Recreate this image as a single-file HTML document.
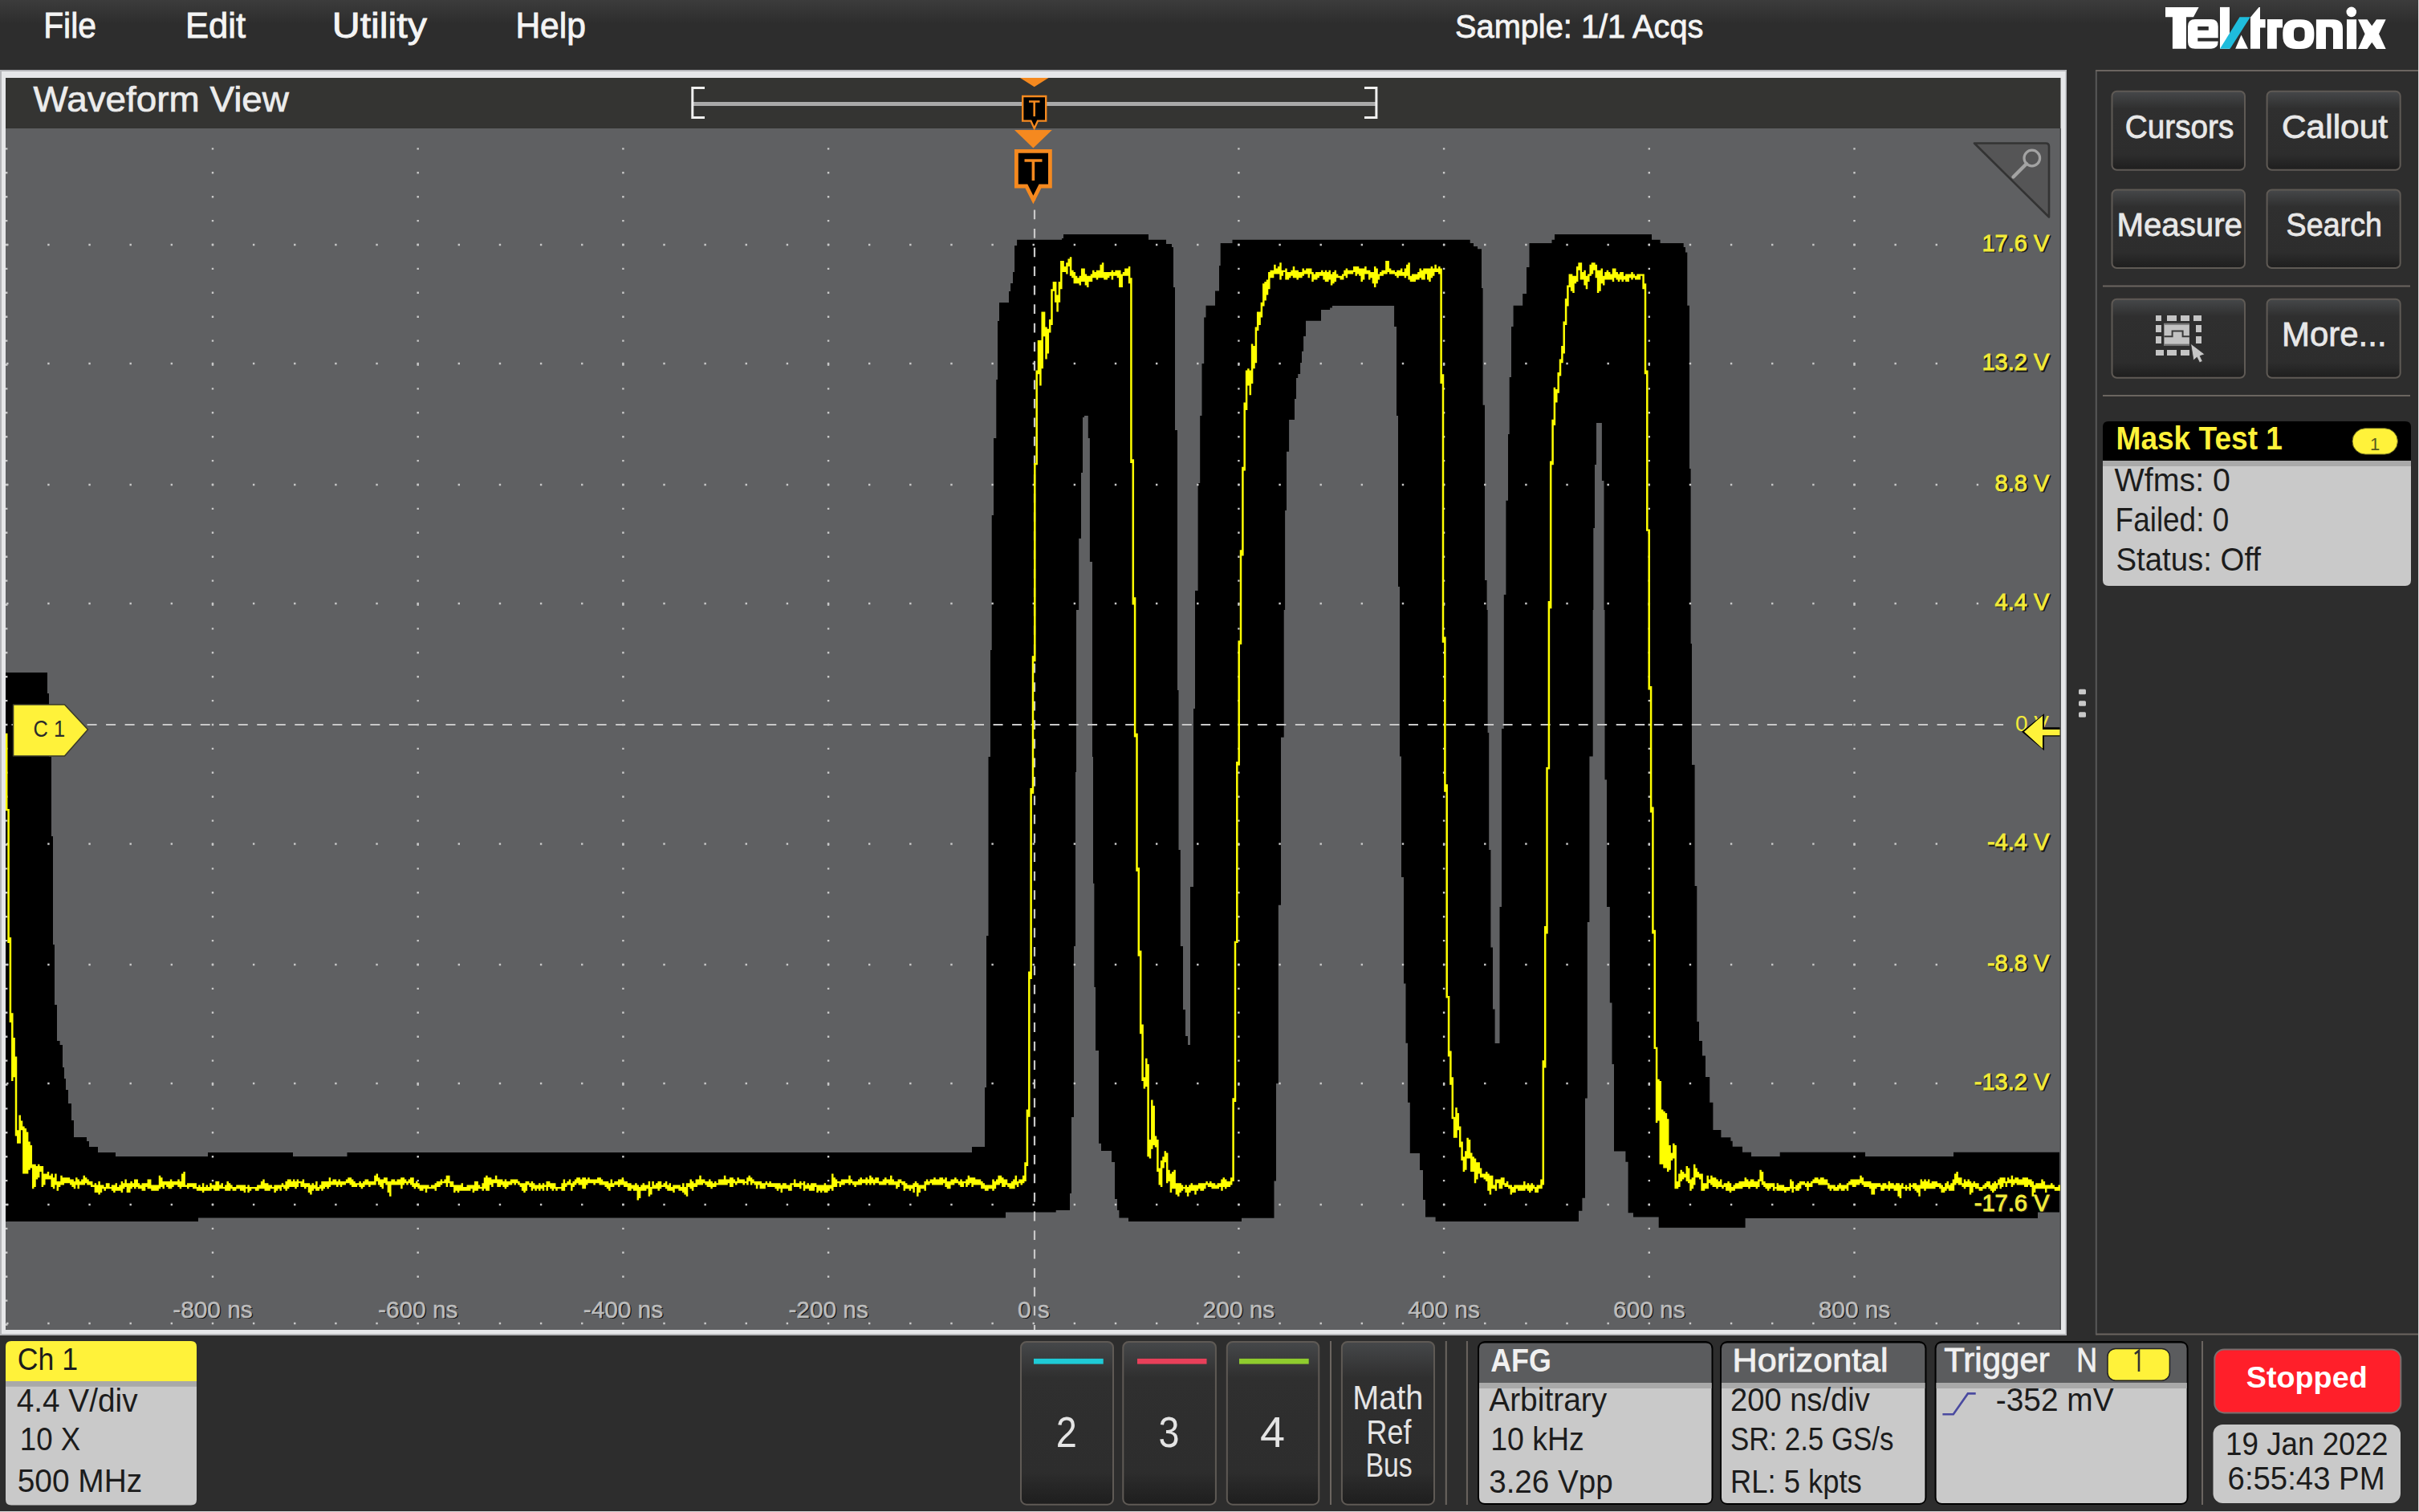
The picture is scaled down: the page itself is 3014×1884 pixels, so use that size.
<!DOCTYPE html><html><head><meta charset="utf-8"><style>
html,body{margin:0;padding:0;background:#2d2d2d;width:3014px;height:1884px;overflow:hidden}
svg{display:block;font-family:"Liberation Sans",sans-serif}
</style></head><body>
<svg width="3014" height="1884" viewBox="0 0 3014 1884">
<defs>
<linearGradient id="gTop" x1="0" y1="0" x2="0" y2="1"><stop offset="0" stop-color="#3c3c3c"/><stop offset="1" stop-color="#2d2d2d"/></linearGradient>
<linearGradient id="gBtn" x1="0" y1="0" x2="0" y2="1"><stop offset="0" stop-color="#46484a"/><stop offset="0.22" stop-color="#2f2f2f"/><stop offset="0.8" stop-color="#2d2d2d"/><stop offset="1" stop-color="#1e1e1e"/></linearGradient>
</defs>
<rect x="0" y="0" width="3014" height="1884" fill="#2d2d2d"/>
<rect x="0" y="0" width="3014" height="30" fill="url(#gTop)"/>

<rect x="0" y="87" width="2575" height="1577" fill="#b5b6b9"/>
<rect x="2" y="89" width="2571.5" height="1573" fill="#e6e7e9"/>
<rect x="7" y="97" width="2560.5" height="63" fill="#343432"/>
<rect x="7" y="160" width="2560.5" height="1497" fill="#5f6062"/><rect x="2566" y="160" width="2" height="1497" fill="#545557"/>
<path d="M7,838 L59,838 L59,864 L61,864 L61,943 L64,943 L64,1042 L66,1042 L66,1177 L68,1177 L68,1252 L71,1252 L71,1297 L74.6,1297 L74.6,1302 L78,1302 L78,1330 L80,1330 L80,1344 L82,1344 L82,1358 L85,1358 L85,1375 L89,1375 L89,1396 L92,1396 L92,1417 L108,1417 L108,1422 L111,1422 L111,1429 L122,1429 L122,1436 L144,1436 L144,1441 L259,1441 L259,1436 L365,1436 L365,1441 L432.5,1441 L432.5,1436 L1211,1436 L1211,1429 L1227,1429 L1227,1355 L1229,1355 L1229,1166 L1231.5,1166 L1231.5,943 L1234,943 L1234,810 L1235.7,810 L1235.7,642 L1238,642 L1238,546 L1241.3,546 L1241.3,473 L1243,473 L1243,400 L1245,400 L1245,377 L1257,377 L1257,363 L1259.1,363 L1259.1,353 L1262,353 L1262,339 L1264.1,339 L1264.1,306 L1267.1,306 L1267.1,298.8 L1323,298.8 L1323,297 L1325,297 L1325,292.1 L1431,292.1 L1431,298.8 L1453,298.8 L1453,304 L1460,304 L1460,308 L1462,308 L1462,358 L1464,358 L1464,536 L1467,536 L1467,860 L1468.5,860 L1468.5,1059 L1470.8,1059 L1470.8,1179 L1474,1179 L1474,1258 L1477,1258 L1477,1291 L1480,1291 L1480,1302 L1483,1302 L1483,1105 L1487,1105 L1487,883 L1489,883 L1489,736 L1492.6,736 L1492.6,602 L1495.2,602 L1495.2,518 L1497.5,518 L1497.5,453 L1500.2,453 L1500.2,395.5 L1502.5,395.5 L1502.5,380.7 L1514,380.7 L1514,362.5 L1519,362.5 L1519,331 L1520.7,331 L1520.7,303 L1535.5,303 L1535.5,298.8 L1831.7,298.8 L1831.7,303 L1836,303 L1836,307 L1841,307 L1841,310.3 L1846,310.3 L1846,359 L1847.6,359 L1847.6,504.7 L1850,504.7 L1850,723 L1852.6,723 L1852.6,760 L1853.6,760 L1853.6,913 L1855.2,913 L1855.2,1059 L1857.4,1059 L1857.4,1180.6 L1860,1180.6 L1860,1257.4 L1862.6,1257.4 L1862.6,1300 L1868.5,1300 L1868.5,1130 L1871,1130 L1871,908 L1873.8,908 L1873.8,741 L1876.4,741 L1876.4,623.7 L1879,623.7 L1879,541 L1880.7,541 L1880.7,470 L1883,470 L1883,407 L1885.6,407 L1885.6,380.7 L1897.2,380.7 L1897.2,366 L1902,366 L1902,333 L1905.5,333 L1905.5,303 L1933.5,303 L1933.5,298.8 L1937,298.8 L1937,292.1 L2058,292.1 L2058,298.8 L2068.6,298.8 L2068.6,303 L2097.7,303 L2097.7,308 L2100,308 L2100,314.6 L2102.3,314.6 L2102.3,380.7 L2105,380.7 L2105,584 L2106.6,584 L2106.6,802 L2108,802 L2108,953 L2111.6,953 L2111.6,1104 L2114.3,1104 L2114.3,1273 L2117,1273 L2117,1297 L2121,1297 L2121,1315.6 L2125,1315.6 L2125,1342 L2130.2,1342 L2130.2,1373.8 L2134.4,1373.8 L2134.4,1408 L2144.4,1408 L2144.4,1417.3 L2156.4,1417.3 L2156.4,1421.8 L2158.7,1421.8 L2158.7,1428.7 L2171,1428.7 L2171,1435.8 L2182,1435.8 L2182,1441 L2217.7,1441 L2217.7,1435.8 L2324,1435.8 L2324,1441 L2434,1441 L2434,1435.8 L2566,1435.8 L2566,1510.6 L2539,1510.6 L2539,1518 L2174.6,1518 L2174.6,1529.7 L2066.7,1529.7 L2066.7,1516.6 L2035,1516.6 L2035,1511.3 L2028.6,1511.3 L2028.6,1447.8 L2025.4,1447.8 L2025.4,1434.6 L2011,1434.6 L2011,1326 L2008.5,1326 L2008.5,1249.4 L2005.8,1249.4 L2005.8,1130 L2002,1130 L2002,971.6 L1999.5,971.6 L1999.5,760 L1998.5,760 L1998.5,599 L1995.9,599 L1995.9,527 L1989,527 L1989,579 L1987,579 L1987,658 L1985.3,658 L1985.3,760 L1984.7,760 L1984.7,942.5 L1980.4,942.5 L1980.4,1149 L1977.8,1149 L1977.8,1368.5 L1975,1368.5 L1975,1492.8 L1971.4,1492.8 L1971.4,1508.7 L1967,1508.7 L1967,1522 L1788.6,1522 L1788.6,1516.6 L1776,1516.6 L1776,1495 L1773,1495 L1773,1458 L1769,1458 L1769,1437 L1756.8,1437 L1756.8,1373.8 L1754,1373.8 L1754,1299.7 L1751.5,1299.7 L1751.5,1225.6 L1749,1225.6 L1749,1093 L1746,1093 L1746,942.5 L1744,942.5 L1744,731 L1742,731 L1742,518 L1740,518 L1740,407 L1737.1,407 L1737.1,380.9 L1660,380.9 L1660,383.4 L1657.1,383.4 L1657.1,386 L1646,386 L1646,399.7 L1627,399.7 L1627,419 L1624.1,419 L1624.1,437.7 L1622,437.7 L1622,452 L1620.1,452 L1620.1,466 L1617.2,466 L1617.2,471 L1615,471 L1615,497 L1613,497 L1613,523 L1606.1,523 L1606.1,562.8 L1603,562.8 L1603,636 L1601.1,636 L1601.1,760 L1599.7,760 L1599.7,918.7 L1596,918.7 L1596,1127.7 L1592.8,1127.7 L1592.8,1350 L1590,1350 L1590,1471.6 L1587.5,1471.6 L1587.5,1517.7 L1547,1517.7 L1547,1522 L1406,1522 L1406,1517.4 L1394.4,1517.4 L1394.4,1508 L1392,1508 L1392,1494 L1389,1494 L1389,1448 L1385,1448 L1385,1434 L1372,1434 L1372,1424.8 L1369,1424.8 L1369,1309 L1365,1309 L1365,1230 L1363.4,1230 L1363.4,1100.7 L1362,1100.7 L1362,943 L1361,943 L1361,700 L1357.9,700 L1357.9,546 L1355.8,546 L1355.8,518 L1351,518 L1351,520 L1349,520 L1349,589 L1347,589 L1347,671 L1344.2,671 L1344.2,760 L1341,760 L1341,962 L1340,962 L1340,1179 L1338,1179 L1338,1392 L1335,1392 L1335,1487 L1333,1487 L1333,1508 L1315.7,1508 L1315.7,1510.5 L1253,1510.5 L1253,1517.5 L247,1517.5 L247,1522 L7,1522 Z" fill="#000"/>
<clipPath id="cg"><rect x="7" y="160" width="2560.5" height="1497"/></clipPath><g clip-path="url(#cg)"><line x1="8.10" y1="305.0" x2="2440" y2="305.0" stroke="#c8c8c8" stroke-width="2.4" stroke-dasharray="2.4 48.738"/><line x1="8.10" y1="453.0" x2="2440" y2="453.0" stroke="#c8c8c8" stroke-width="2.4" stroke-dasharray="2.4 48.738"/><line x1="8.10" y1="604.0" x2="2480" y2="604.0" stroke="#c8c8c8" stroke-width="2.4" stroke-dasharray="2.4 48.738"/><line x1="8.10" y1="752.0" x2="2480" y2="752.0" stroke="#c8c8c8" stroke-width="2.4" stroke-dasharray="2.4 48.738"/><line x1="8.10" y1="1051.5" x2="2440" y2="1051.5" stroke="#c8c8c8" stroke-width="2.4" stroke-dasharray="2.4 48.738"/><line x1="8.10" y1="1202.0" x2="2440" y2="1202.0" stroke="#c8c8c8" stroke-width="2.4" stroke-dasharray="2.4 48.738"/><line x1="8.10" y1="1350.0" x2="2440" y2="1350.0" stroke="#c8c8c8" stroke-width="2.4" stroke-dasharray="2.4 48.738"/><line x1="8.10" y1="1501.0" x2="2440" y2="1501.0" stroke="#c8c8c8" stroke-width="2.4" stroke-dasharray="2.4 48.738"/><line x1="8.10" y1="1649.0" x2="2560" y2="1649.0" stroke="#c8c8c8" stroke-width="2.4" stroke-dasharray="2.4 48.738"/><line x1="265.0" y1="154.30" x2="265.0" y2="1605" stroke="#c8c8c8" stroke-width="2.4" stroke-dasharray="2.4 27.500"/><line x1="520.7" y1="154.30" x2="520.7" y2="1605" stroke="#c8c8c8" stroke-width="2.4" stroke-dasharray="2.4 27.500"/><line x1="776.4" y1="154.30" x2="776.4" y2="1605" stroke="#c8c8c8" stroke-width="2.4" stroke-dasharray="2.4 27.500"/><line x1="1032.1" y1="154.30" x2="1032.1" y2="1605" stroke="#c8c8c8" stroke-width="2.4" stroke-dasharray="2.4 27.500"/><line x1="1543.4" y1="154.30" x2="1543.4" y2="1605" stroke="#c8c8c8" stroke-width="2.4" stroke-dasharray="2.4 27.500"/><line x1="1799.1" y1="154.30" x2="1799.1" y2="1605" stroke="#c8c8c8" stroke-width="2.4" stroke-dasharray="2.4 27.500"/><line x1="2054.8" y1="154.30" x2="2054.8" y2="1605" stroke="#c8c8c8" stroke-width="2.4" stroke-dasharray="2.4 27.500"/><line x1="2310.5" y1="154.30" x2="2310.5" y2="1605" stroke="#c8c8c8" stroke-width="2.4" stroke-dasharray="2.4 27.500"/><line x1="8.2" y1="154.30" x2="8.2" y2="1652" stroke="#c8c8c8" stroke-width="2.4" stroke-dasharray="2.4 27.500"/><line x1="14.5" y1="903" x2="2497" y2="903" stroke="#c8c8c8" stroke-width="2.2" stroke-dasharray="12 11.52"/><line x1="1289" y1="167.25" x2="1289" y2="1657" stroke="#c8c8c8" stroke-width="2.2" stroke-dasharray="11.8 11.75"/></g>
<path d="M8.2,913.7V1010.3M10.6,1007.9V1175.1M12.9,1168.1V1274.1M15.3,1262.3V1347.1M17.6,1292.9V1342.3M20.0,1316.4V1415.4M22.3,1408.3V1424.8M24.7,1389.5V1424.8M27.0,1396.5V1408.3M29.4,1403.6V1462.5M31.8,1405.9V1462.5M34.1,1410.6V1462.5M36.5,1422.4V1457.7M38.8,1427.1V1455.4M41.2,1450.7V1481.3M43.5,1450.7V1478.9M45.9,1453.0V1469.5M48.2,1450.7V1467.2M50.6,1453.0V1460.1M52.9,1453.0V1478.9M55.3,1462.5V1476.6M57.7,1462.5V1469.5M60.0,1460.1V1469.5M62.4,1464.8V1469.5M64.7,1462.5V1478.9M67.1,1467.2V1481.3M69.4,1462.5V1476.6M71.8,1471.9V1483.7M74.1,1471.9V1478.9M76.5,1464.8V1476.6M78.8,1467.2V1476.6M81.2,1467.2V1474.2M83.6,1467.2V1474.2M85.9,1467.2V1474.2M88.3,1469.5V1476.6M90.6,1469.5V1478.9M93.0,1471.9V1481.3M95.3,1467.2V1476.6M97.7,1469.5V1481.3M100.0,1471.9V1476.6M102.4,1469.5V1476.6M104.8,1464.8V1476.6M107.1,1467.2V1474.2M109.5,1469.5V1476.6M111.8,1471.9V1476.6M114.2,1471.9V1478.9M116.5,1476.6V1478.9M118.9,1474.2V1486.0M121.2,1476.6V1486.0M123.6,1471.9V1488.4M126.0,1476.6V1486.0M128.3,1476.6V1481.3M130.7,1478.9V1483.7M133.0,1474.2V1481.3M135.4,1474.2V1481.3M137.7,1478.9V1481.3M140.1,1476.6V1483.7M142.4,1476.6V1486.0M144.8,1474.2V1483.7M147.1,1478.9V1483.7M149.5,1476.6V1483.7M151.9,1471.9V1486.0M154.2,1474.2V1481.3M156.6,1469.5V1478.9M158.9,1474.2V1486.0M161.3,1474.2V1486.0M163.6,1471.9V1481.3M166.0,1474.2V1478.9M168.3,1469.5V1481.3M170.7,1469.5V1478.9M173.0,1474.2V1481.3M175.4,1476.6V1481.3M177.8,1474.2V1483.7M180.1,1474.2V1483.7M182.5,1474.2V1478.9M184.8,1469.5V1481.3M187.2,1469.5V1481.3M189.5,1476.6V1483.7M191.9,1476.6V1483.7M194.2,1476.6V1483.7M196.6,1476.6V1483.7M199.0,1464.8V1481.3M201.3,1467.2V1478.9M203.7,1471.9V1481.3M206.0,1471.9V1476.6M208.4,1471.9V1478.9M210.7,1471.9V1481.3M213.1,1469.5V1481.3M215.4,1471.9V1478.9M217.8,1471.9V1476.6M220.1,1471.9V1476.6M222.5,1469.5V1478.9M224.9,1471.9V1481.3M227.2,1462.5V1478.9M229.6,1460.1V1478.9M231.9,1476.6V1478.9M234.3,1474.2V1481.3M236.6,1474.2V1478.9M239.0,1474.2V1478.9M241.3,1474.2V1481.3M243.7,1474.2V1481.3M246.1,1478.9V1483.7M248.4,1476.6V1483.7M250.8,1478.9V1483.7M253.1,1474.2V1486.0M255.5,1478.9V1483.7M257.8,1476.6V1483.7M260.2,1478.9V1483.7M262.5,1474.2V1483.7M264.9,1476.6V1481.3M267.2,1476.6V1483.7M269.6,1471.9V1483.7M272.0,1471.9V1483.7M274.3,1476.6V1481.3M276.7,1474.2V1481.3M279.0,1478.9V1481.3M281.4,1476.6V1483.7M283.7,1471.9V1483.7M286.1,1474.2V1483.7M288.4,1476.6V1481.3M290.8,1478.9V1483.7M293.2,1478.9V1483.7M295.5,1476.6V1481.3M297.9,1476.6V1481.3M300.2,1476.6V1483.7M302.6,1476.6V1483.7M304.9,1476.6V1486.0M307.3,1478.9V1481.3M309.6,1476.6V1486.0M312.0,1478.9V1483.7M314.3,1478.9V1481.3M316.7,1478.9V1481.3M319.1,1478.9V1483.7M321.4,1476.6V1483.7M323.8,1476.6V1481.3M326.1,1471.9V1481.3M328.5,1469.5V1481.3M330.8,1474.2V1483.7M333.2,1474.2V1483.7M335.5,1476.6V1483.7M337.9,1476.6V1481.3M340.3,1478.9V1481.3M342.6,1476.6V1486.0M345.0,1476.6V1483.7M347.3,1476.6V1481.3M349.7,1476.6V1483.7M352.0,1474.2V1478.9M354.4,1476.6V1481.3M356.7,1471.9V1483.7M359.1,1469.5V1481.3M361.5,1469.5V1478.9M363.8,1471.9V1478.9M366.2,1469.5V1478.9M368.5,1471.9V1481.3M370.9,1469.5V1478.9M373.2,1471.9V1474.2M375.6,1471.9V1478.9M377.9,1469.5V1478.9M380.3,1474.2V1481.3M382.6,1474.2V1478.9M385.0,1474.2V1486.0M387.4,1476.6V1488.4M389.7,1474.2V1483.7M392.1,1476.6V1481.3M394.4,1471.9V1483.7M396.8,1478.9V1483.7M399.1,1476.6V1481.3M401.5,1471.9V1483.7M403.8,1471.9V1481.3M406.2,1471.9V1478.9M408.6,1471.9V1481.3M410.9,1467.2V1478.9M413.3,1471.9V1476.6M415.6,1469.5V1476.6M418.0,1469.5V1476.6M420.3,1471.9V1478.9M422.7,1469.5V1476.6M425.0,1471.9V1478.9M427.4,1471.9V1476.6M429.7,1471.9V1476.6M432.1,1469.5V1474.2M434.5,1467.2V1474.2M436.8,1467.2V1476.6M439.2,1469.5V1478.9M441.5,1471.9V1478.9M443.9,1474.2V1478.9M446.2,1474.2V1476.6M448.6,1471.9V1478.9M450.9,1474.2V1481.3M453.3,1471.9V1478.9M455.7,1469.5V1476.6M458.0,1469.5V1476.6M460.4,1471.9V1478.9M462.7,1471.9V1476.6M465.1,1471.9V1476.6M467.4,1464.8V1476.6M469.8,1462.5V1471.9M472.1,1467.2V1476.6M474.5,1469.5V1478.9M476.8,1469.5V1481.3M479.2,1467.2V1474.2M481.6,1467.2V1476.6M483.9,1471.9V1486.0M486.3,1471.9V1490.7M488.6,1469.5V1476.6M491.0,1469.5V1476.6M493.3,1471.9V1476.6M495.7,1469.5V1476.6M498.0,1469.5V1476.6M500.4,1467.2V1481.3M502.8,1467.2V1476.6M505.1,1469.5V1474.2M507.5,1471.9V1476.6M509.8,1469.5V1474.2M512.2,1467.2V1476.6M514.5,1467.2V1478.9M516.9,1474.2V1481.3M519.2,1471.9V1478.9M521.6,1474.2V1481.3M523.9,1476.6V1483.7M526.3,1476.6V1483.7M528.7,1476.6V1481.3M531.0,1476.6V1486.0M533.4,1476.6V1481.3M535.7,1478.9V1481.3M538.1,1476.6V1481.3M540.4,1476.6V1481.3M542.8,1474.2V1483.7M545.1,1471.9V1478.9M547.5,1471.9V1478.9M549.9,1469.5V1476.6M552.2,1471.9V1474.2M554.6,1469.5V1474.2M556.9,1464.8V1478.9M559.3,1464.8V1474.2M561.6,1471.9V1478.9M564.0,1471.9V1478.9M566.3,1476.6V1486.0M568.7,1476.6V1483.7M571.0,1476.6V1486.0M573.4,1476.6V1483.7M575.8,1474.2V1483.7M578.1,1478.9V1483.7M580.5,1478.9V1483.7M582.8,1476.6V1483.7M585.2,1476.6V1483.7M587.5,1476.6V1481.3M589.9,1476.6V1486.0M592.2,1471.9V1483.7M594.6,1471.9V1483.7M597.0,1476.6V1481.3M599.3,1478.9V1481.3M601.7,1474.2V1483.7M604.0,1467.2V1481.3M606.4,1464.8V1483.7M608.7,1467.2V1483.7M611.1,1467.2V1476.6M613.4,1469.5V1478.9M615.8,1469.5V1474.2M618.1,1464.8V1474.2M620.5,1469.5V1478.9M622.9,1469.5V1478.9M625.2,1469.5V1476.6M627.6,1471.9V1478.9M629.9,1469.5V1481.3M632.3,1471.9V1478.9M634.6,1471.9V1476.6M637.0,1469.5V1476.6M639.3,1469.5V1474.2M641.7,1469.5V1476.6M644.1,1469.5V1474.2M646.4,1471.9V1476.6M648.8,1474.2V1478.9M651.1,1474.2V1483.7M653.5,1474.2V1486.0M655.8,1471.9V1483.7M658.2,1471.9V1476.6M660.5,1474.2V1478.9M662.9,1471.9V1483.7M665.2,1474.2V1481.3M667.6,1476.6V1483.7M670.0,1476.6V1481.3M672.3,1474.2V1483.7M674.7,1476.6V1481.3M677.0,1474.2V1483.7M679.4,1476.6V1478.9M681.7,1471.9V1483.7M684.1,1471.9V1478.9M686.4,1474.2V1481.3M688.8,1474.2V1483.7M691.2,1474.2V1481.3M693.5,1478.9V1483.7M695.9,1478.9V1481.3M698.2,1478.9V1481.3M700.6,1474.2V1483.7M702.9,1469.5V1483.7M705.3,1474.2V1478.9M707.6,1471.9V1476.6M710.0,1469.5V1476.6M712.3,1474.2V1483.7M714.7,1471.9V1478.9M717.1,1469.5V1476.6M719.4,1467.2V1474.2M721.8,1467.2V1476.6M724.1,1469.5V1476.6M726.5,1467.2V1481.3M728.8,1467.2V1481.3M731.2,1469.5V1476.6M733.5,1467.2V1474.2M735.9,1469.5V1474.2M738.3,1469.5V1474.2M740.6,1469.5V1476.6M743.0,1469.5V1474.2M745.3,1467.2V1474.2M747.7,1467.2V1476.6M750.0,1469.5V1476.6M752.4,1471.9V1476.6M754.7,1471.9V1478.9M757.1,1471.9V1481.3M759.4,1474.2V1483.7M761.8,1469.5V1478.9M764.2,1474.2V1478.9M766.5,1471.9V1476.6M768.9,1471.9V1476.6M771.2,1469.5V1478.9M773.6,1469.5V1476.6M775.9,1467.2V1476.6M778.3,1471.9V1478.9M780.6,1471.9V1478.9M783.0,1474.2V1483.7M785.4,1474.2V1483.7M787.7,1476.6V1481.3M790.1,1476.6V1483.7M792.4,1474.2V1483.7M794.8,1476.6V1495.4M797.1,1478.9V1493.1M799.5,1476.6V1483.7M801.8,1474.2V1483.7M804.2,1476.6V1483.7M806.5,1476.6V1481.3M808.9,1471.9V1490.7M811.3,1478.9V1488.4M813.6,1471.9V1481.3M816.0,1476.6V1481.3M818.3,1474.2V1481.3M820.7,1471.9V1483.7M823.0,1471.9V1481.3M825.4,1476.6V1478.9M827.7,1474.2V1478.9M830.1,1471.9V1481.3M832.5,1476.6V1483.7M834.8,1474.2V1483.7M837.2,1478.9V1483.7M839.5,1476.6V1486.0M841.9,1476.6V1481.3M844.2,1476.6V1481.3M846.6,1476.6V1483.7M848.9,1478.9V1483.7M851.3,1474.2V1486.0M853.6,1478.9V1488.4M856.0,1474.2V1490.7M858.4,1474.2V1478.9M860.7,1469.5V1481.3M863.1,1471.9V1483.7M865.4,1474.2V1478.9M867.8,1469.5V1478.9M870.1,1469.5V1476.6M872.5,1464.8V1476.6M874.8,1469.5V1476.6M877.2,1469.5V1474.2M879.6,1471.9V1476.6M881.9,1471.9V1478.9M884.3,1469.5V1478.9M886.6,1471.9V1481.3M889.0,1474.2V1478.9M891.3,1471.9V1478.9M893.7,1474.2V1476.6M896.0,1469.5V1476.6M898.4,1469.5V1476.6M900.7,1469.5V1476.6M903.1,1464.8V1476.6M905.5,1469.5V1476.6M907.8,1469.5V1474.2M910.2,1467.2V1478.9M912.5,1467.2V1478.9M914.9,1469.5V1474.2M917.2,1471.9V1476.6M919.6,1467.2V1474.2M921.9,1469.5V1474.2M924.3,1469.5V1474.2M926.7,1469.5V1476.6M929.0,1471.9V1474.2M931.4,1467.2V1476.6M933.7,1464.8V1471.9M936.1,1467.2V1476.6M938.4,1469.5V1474.2M940.8,1471.9V1476.6M943.1,1471.9V1481.3M945.5,1471.9V1476.6M947.8,1471.9V1481.3M950.2,1474.2V1481.3M952.6,1474.2V1481.3M954.9,1471.9V1476.6M957.3,1474.2V1478.9M959.6,1471.9V1478.9M962.0,1474.2V1478.9M964.3,1474.2V1478.9M966.7,1474.2V1481.3M969.0,1474.2V1483.7M971.4,1474.2V1481.3M973.8,1476.6V1486.0M976.1,1474.2V1481.3M978.5,1474.2V1481.3M980.8,1476.6V1481.3M983.2,1476.6V1483.7M985.5,1474.2V1483.7M987.9,1474.2V1476.6M990.2,1469.5V1478.9M992.6,1474.2V1478.9M994.9,1474.2V1478.9M997.3,1471.9V1481.3M999.7,1474.2V1476.6M1002.0,1471.9V1483.7M1004.4,1476.6V1481.3M1006.7,1474.2V1481.3M1009.1,1476.6V1483.7M1011.4,1474.2V1483.7M1013.8,1474.2V1483.7M1016.1,1474.2V1478.9M1018.5,1476.6V1486.0M1020.9,1476.6V1483.7M1023.2,1476.6V1486.0M1025.6,1476.6V1483.7M1027.9,1474.2V1486.0M1030.3,1476.6V1486.0M1032.6,1476.6V1483.7M1035.0,1476.6V1481.3M1037.3,1462.5V1483.7M1039.7,1467.2V1478.9M1042.0,1469.5V1478.9M1044.4,1471.9V1474.2M1046.8,1471.9V1478.9M1049.1,1469.5V1476.6M1051.5,1469.5V1476.6M1053.8,1469.5V1474.2M1056.2,1469.5V1474.2M1058.5,1464.8V1476.6M1060.9,1469.5V1474.2M1063.2,1471.9V1476.6M1065.6,1471.9V1478.9M1068.0,1471.9V1476.6M1070.3,1469.5V1476.6M1072.7,1467.2V1476.6M1075.0,1469.5V1474.2M1077.4,1469.5V1474.2M1079.7,1467.2V1476.6M1082.1,1469.5V1474.2M1084.4,1464.8V1476.6M1086.8,1467.2V1474.2M1089.1,1469.5V1476.6M1091.5,1467.2V1474.2M1093.9,1467.2V1474.2M1096.2,1471.9V1476.6M1098.6,1471.9V1476.6M1100.9,1469.5V1476.6M1103.3,1467.2V1476.6M1105.6,1469.5V1474.2M1108.0,1469.5V1476.6M1110.3,1464.8V1476.6M1112.7,1469.5V1476.6M1115.1,1471.9V1476.6M1117.4,1471.9V1481.3M1119.8,1469.5V1478.9M1122.1,1469.5V1474.2M1124.5,1471.9V1476.6M1126.8,1471.9V1483.7M1129.2,1474.2V1481.3M1131.5,1476.6V1481.3M1133.9,1476.6V1483.7M1136.2,1476.6V1481.3M1138.6,1474.2V1486.0M1141.0,1471.9V1478.9M1143.3,1474.2V1490.7M1145.7,1476.6V1486.0M1148.0,1476.6V1481.3M1150.4,1476.6V1481.3M1152.7,1471.9V1483.7M1155.1,1469.5V1476.6M1157.4,1471.9V1476.6M1159.8,1469.5V1474.2M1162.2,1469.5V1476.6M1164.5,1467.2V1476.6M1166.9,1469.5V1476.6M1169.2,1469.5V1476.6M1171.6,1467.2V1476.6M1173.9,1467.2V1476.6M1176.3,1469.5V1474.2M1178.6,1467.2V1478.9M1181.0,1471.9V1481.3M1183.3,1471.9V1481.3M1185.7,1469.5V1476.6M1188.1,1469.5V1476.6M1190.4,1467.2V1474.2M1192.8,1469.5V1474.2M1195.1,1471.9V1476.6M1197.5,1469.5V1478.9M1199.8,1471.9V1478.9M1202.2,1471.9V1474.2M1204.5,1469.5V1478.9M1206.9,1464.8V1476.6M1209.3,1467.2V1474.2M1211.6,1467.2V1478.9M1214.0,1467.2V1476.6M1216.3,1469.5V1476.6M1218.7,1469.5V1476.6M1221.0,1469.5V1476.6M1223.4,1471.9V1481.3M1225.7,1474.2V1481.3M1228.1,1476.6V1483.7M1230.4,1476.6V1483.7M1232.8,1476.6V1481.3M1235.2,1476.6V1481.3M1237.5,1469.5V1483.7M1239.9,1471.9V1481.3M1242.2,1469.5V1476.6M1244.6,1464.8V1476.6M1246.9,1464.8V1474.2M1249.3,1467.2V1478.9M1251.6,1469.5V1478.9M1254.0,1469.5V1476.6M1256.4,1474.2V1478.9M1258.7,1474.2V1481.3M1261.1,1471.9V1481.3M1263.4,1469.5V1481.3M1265.8,1464.8V1476.6M1268.1,1471.9V1478.9M1270.5,1469.5V1474.2M1272.8,1469.5V1476.6M1275.2,1464.8V1474.2M1277.5,1448.3V1471.9M1279.9,1382.4V1453.0M1282.3,1210.5V1391.8M1284.6,982.0V1219.9M1287.0,817.2V989.1M1289.3,577.0V824.2M1291.7,461.6V579.3M1294.0,423.9V466.3M1296.4,423.9V480.4M1298.7,388.6V459.2M1301.1,388.6V419.2M1303.5,407.4V447.5M1305.8,409.8V440.4M1308.2,398.0V414.5M1310.5,360.3V405.1M1312.9,350.9V362.7M1315.2,350.9V376.8M1317.6,367.4V388.6M1319.9,350.9V376.8M1322.3,325.0V360.3M1324.6,325.0V339.1M1327.0,332.1V339.1M1329.4,327.3V341.5M1331.7,322.6V332.1M1334.1,320.3V343.8M1336.4,336.8V346.2M1338.8,339.1V353.2M1341.1,343.8V353.2M1343.5,346.2V353.2M1345.8,343.8V355.6M1348.2,334.4V350.9M1350.6,334.4V350.9M1352.9,341.5V355.6M1355.3,343.8V358.0M1357.6,343.8V350.9M1360.0,341.5V350.9M1362.3,336.8V346.2M1364.7,339.1V346.2M1367.0,336.8V348.5M1369.4,336.8V346.2M1371.7,329.7V346.2M1374.1,327.3V346.2M1376.5,339.1V348.5M1378.8,339.1V348.5M1381.2,339.1V346.2M1383.5,339.1V343.8M1385.9,336.8V348.5M1388.2,339.1V343.8M1390.6,336.8V343.8M1392.9,336.8V346.2M1395.3,336.8V358.0M1397.7,341.5V358.0M1400.0,339.1V343.8M1402.4,334.4V343.8M1404.7,334.4V343.8M1407.1,332.1V353.3M1409.4,346.2V577.0M1411.8,572.3V753.6M1414.1,744.2V918.5M1416.5,913.7V1085.7M1418.8,1080.9V1191.6M1421.2,1184.6V1288.2M1423.6,1276.4V1347.1M1425.9,1342.3V1356.5M1428.3,1318.8V1354.1M1430.6,1325.9V1441.3M1433.0,1420.1V1443.6M1435.3,1370.6V1431.8M1437.7,1377.7V1427.1M1440.0,1415.4V1429.5M1442.4,1420.1V1460.1M1444.8,1455.4V1476.6M1447.1,1446.0V1478.9M1449.5,1441.3V1455.4M1451.8,1434.2V1448.3M1454.2,1436.5V1474.2M1456.5,1457.7V1471.9M1458.9,1462.5V1486.0M1461.2,1460.1V1481.3M1463.6,1457.7V1481.3M1465.9,1474.2V1488.4M1468.3,1474.2V1490.7M1470.7,1474.2V1486.0M1473.0,1476.6V1483.7M1475.4,1478.9V1481.3M1477.7,1476.6V1486.0M1480.1,1478.9V1490.7M1482.4,1476.6V1486.0M1484.8,1474.2V1483.7M1487.1,1476.6V1483.7M1489.5,1476.6V1488.4M1491.9,1476.6V1483.7M1494.2,1474.2V1481.3M1496.6,1474.2V1483.7M1498.9,1474.2V1483.7M1501.3,1474.2V1481.3M1503.6,1471.9V1476.6M1506.0,1474.2V1478.9M1508.3,1471.9V1478.9M1510.7,1474.2V1481.3M1513.0,1474.2V1481.3M1515.4,1476.6V1481.3M1517.8,1474.2V1481.3M1520.1,1474.2V1478.9M1522.5,1469.5V1483.7M1524.8,1467.2V1478.9M1527.2,1469.5V1481.3M1529.5,1471.9V1478.9M1531.9,1471.9V1478.9M1534.2,1467.2V1476.6M1536.6,1368.3V1471.9M1539.0,1172.8V1373.0M1541.3,949.1V1175.1M1543.7,798.3V953.8M1546.0,685.3V803.1M1548.4,581.7V692.4M1550.7,501.6V586.4M1553.1,461.6V511.0M1555.4,459.2V480.4M1557.8,461.6V492.2M1560.1,428.6V478.1M1562.5,431.0V459.2M1564.9,407.4V452.2M1567.2,388.6V412.1M1569.6,388.6V405.1M1571.9,376.8V395.6M1574.3,353.2V381.5M1576.6,350.9V374.4M1579.0,348.5V367.4M1581.3,339.1V360.3M1583.7,336.8V346.2M1586.1,336.8V346.2M1588.4,329.7V341.5M1590.8,334.4V341.5M1593.1,332.1V341.5M1595.5,327.3V348.5M1597.8,336.8V343.8M1600.2,336.8V339.1M1602.5,334.4V348.5M1604.9,339.1V348.5M1607.2,339.1V346.2M1609.6,336.8V343.8M1612.0,332.1V346.2M1614.3,336.8V346.2M1616.7,336.8V348.5M1619.0,339.1V346.2M1621.4,339.1V346.2M1623.7,334.4V343.8M1626.1,336.8V341.5M1628.4,334.4V341.5M1630.8,334.4V346.2M1633.2,334.4V341.5M1635.5,339.1V350.9M1637.9,341.5V348.5M1640.2,339.1V348.5M1642.6,339.1V346.2M1644.9,339.1V343.8M1647.3,336.8V343.8M1649.6,339.1V348.5M1652.0,336.8V350.9M1654.3,339.1V350.9M1656.7,336.8V348.5M1659.1,341.5V355.6M1661.4,339.1V353.3M1663.8,336.8V350.9M1666.1,341.5V346.2M1668.5,343.8V346.2M1670.8,343.8V348.5M1673.2,341.5V348.5M1675.5,336.8V343.8M1677.9,334.4V346.2M1680.3,336.8V341.5M1682.6,336.8V341.5M1685.0,336.8V341.5M1687.3,332.1V339.1M1689.7,332.1V343.8M1692.0,332.1V341.5M1694.4,334.4V343.8M1696.7,334.4V350.9M1699.1,334.4V348.5M1701.4,332.1V341.5M1703.8,336.8V341.5M1706.2,336.8V348.5M1708.5,339.1V346.2M1710.9,339.1V353.2M1713.2,332.1V358.0M1715.6,334.4V353.2M1717.9,341.5V348.5M1720.3,339.1V343.8M1722.6,336.8V343.8M1725.0,336.8V341.5M1727.4,325.0V341.5M1729.7,325.0V339.1M1732.1,334.4V341.5M1734.4,336.8V341.5M1736.8,336.8V341.5M1739.1,339.1V343.8M1741.5,336.8V346.2M1743.8,336.8V343.8M1746.2,334.4V343.8M1748.5,339.1V343.8M1750.9,334.4V346.2M1753.3,329.7V343.8M1755.6,327.3V348.5M1758.0,343.8V350.9M1760.3,341.5V350.9M1762.7,341.5V350.9M1765.0,341.5V348.5M1767.4,339.1V348.5M1769.7,334.4V346.2M1772.1,336.8V348.5M1774.5,334.4V348.5M1776.8,334.4V341.5M1779.2,334.4V348.5M1781.5,334.4V350.9M1783.9,332.1V346.2M1786.2,334.4V343.8M1788.6,329.7V339.1M1790.9,334.4V339.1M1793.3,332.1V341.5M1795.6,334.4V478.1M1798.0,466.3V800.7M1800.4,793.6V986.7M1802.7,977.3V1243.4M1805.1,1241.1V1316.4M1807.4,1309.4V1351.8M1809.8,1342.3V1394.2M1812.1,1391.8V1417.7M1814.5,1380.0V1417.7M1816.8,1387.1V1408.3M1819.2,1403.6V1429.5M1821.6,1422.4V1446.0M1823.9,1441.3V1460.1M1826.3,1434.2V1457.7M1828.6,1417.7V1443.6M1831.0,1420.1V1443.6M1833.3,1436.5V1460.1M1835.7,1441.3V1460.1M1838.0,1443.6V1474.2M1840.4,1448.3V1469.5M1842.7,1448.3V1462.5M1845.1,1455.4V1467.2M1847.5,1462.5V1467.2M1849.8,1462.5V1469.5M1852.2,1460.1V1471.9M1854.5,1462.5V1483.7M1856.9,1464.8V1488.4M1859.2,1464.8V1481.3M1861.6,1476.6V1481.3M1863.9,1469.5V1483.7M1866.3,1469.5V1474.2M1868.7,1469.5V1481.3M1871.0,1467.2V1481.3M1873.4,1467.2V1476.6M1875.7,1474.2V1478.9M1878.1,1471.9V1478.9M1880.4,1476.6V1481.3M1882.8,1476.6V1488.4M1885.1,1478.9V1486.0M1887.5,1476.6V1486.0M1889.8,1476.6V1481.3M1892.2,1476.6V1483.7M1894.6,1476.6V1483.7M1896.9,1476.6V1483.7M1899.3,1471.9V1483.7M1901.6,1476.6V1481.3M1904.0,1474.2V1483.7M1906.3,1476.6V1486.0M1908.7,1474.2V1483.7M1911.0,1476.6V1481.3M1913.4,1478.9V1486.0M1915.8,1476.6V1486.0M1918.1,1476.6V1481.3M1920.5,1469.5V1481.3M1922.8,1321.2V1476.6M1925.2,1154.0V1330.6M1927.5,956.1V1163.4M1929.9,748.9V958.5M1932.2,574.6V758.3M1934.6,522.8V579.3M1936.9,482.8V529.9M1939.3,485.1V501.6M1941.7,463.9V489.8M1944.0,447.4V468.6M1946.4,431.0V452.2M1948.7,400.4V440.4M1951.1,372.1V405.1M1953.4,355.6V381.5M1955.8,341.5V358.0M1958.1,341.5V362.7M1960.5,343.8V365.0M1962.9,343.8V353.2M1965.2,332.1V350.9M1967.6,327.3V336.8M1969.9,327.3V348.5M1972.3,339.1V348.5M1974.6,336.8V355.6M1977.0,343.8V360.3M1979.3,341.5V350.9M1981.7,329.7V343.8M1984.0,327.3V341.5M1986.4,327.3V336.8M1988.8,329.7V346.2M1991.1,336.8V365.0M1993.5,336.8V362.7M1995.8,334.4V353.2M1998.2,343.8V355.6M2000.5,339.1V348.5M2002.9,336.8V348.5M2005.2,339.1V348.5M2007.6,341.5V348.5M2010.0,334.4V350.9M2012.3,334.4V346.2M2014.7,339.1V348.5M2017.0,341.5V350.9M2019.4,339.1V348.5M2021.7,339.1V350.9M2024.1,343.8V348.5M2026.4,341.5V350.9M2028.8,341.5V350.9M2031.1,341.5V346.2M2033.5,339.1V348.5M2035.9,341.5V346.2M2038.2,343.8V348.5M2040.6,341.5V348.5M2042.9,341.5V348.5M2045.3,341.5V343.8M2047.6,341.5V360.3M2050.0,353.2V466.3M2052.3,461.6V661.8M2054.7,659.4V859.6M2057.1,854.9V1012.6M2059.4,1005.6V1163.4M2061.8,1158.7V1307.0M2064.1,1304.7V1398.9M2066.5,1344.7V1396.5M2068.8,1347.1V1450.7M2071.2,1382.4V1450.7M2073.5,1384.7V1455.4M2075.9,1387.1V1455.4M2078.2,1394.2V1460.1M2080.6,1427.1V1457.7M2083.0,1436.5V1446.0M2085.3,1424.8V1443.6M2087.7,1427.1V1481.3M2090.0,1471.9V1481.3M2092.4,1462.5V1478.9M2094.7,1457.7V1471.9M2097.1,1460.1V1469.5M2099.4,1462.5V1467.2M2101.8,1453.0V1471.9M2104.2,1455.4V1474.2M2106.5,1469.5V1483.7M2108.9,1467.2V1481.3M2111.2,1450.7V1476.6M2113.6,1455.4V1467.2M2115.9,1460.1V1467.2M2118.3,1462.5V1469.5M2120.6,1462.5V1483.7M2123.0,1474.2V1483.7M2125.3,1474.2V1481.3M2127.7,1464.8V1481.3M2130.1,1469.5V1474.2M2132.4,1464.8V1476.6M2134.8,1467.2V1478.9M2137.1,1467.2V1478.9M2139.5,1469.5V1481.3M2141.8,1471.9V1478.9M2144.2,1469.5V1478.9M2146.5,1476.6V1481.3M2148.9,1474.2V1478.9M2151.3,1474.2V1483.7M2153.6,1471.9V1483.7M2156.0,1474.2V1486.0M2158.3,1478.9V1483.7M2160.7,1476.6V1483.7M2163.0,1474.2V1481.3M2165.4,1474.2V1481.3M2167.7,1471.9V1481.3M2170.1,1471.9V1481.3M2172.4,1471.9V1478.9M2174.8,1467.2V1478.9M2177.2,1469.5V1478.9M2179.5,1471.9V1481.3M2181.9,1469.5V1478.9M2184.2,1469.5V1478.9M2186.6,1471.9V1478.9M2188.9,1471.9V1481.3M2191.3,1469.5V1478.9M2193.6,1457.7V1471.9M2196.0,1460.1V1476.6M2198.4,1471.9V1478.9M2200.7,1474.2V1481.3M2203.1,1474.2V1483.7M2205.4,1474.2V1481.3M2207.8,1474.2V1478.9M2210.1,1474.2V1483.7M2212.5,1478.9V1481.3M2214.8,1474.2V1483.7M2217.2,1476.6V1483.7M2219.5,1476.6V1483.7M2221.9,1476.6V1483.7M2224.3,1478.9V1486.0M2226.6,1478.9V1483.7M2229.0,1478.9V1483.7M2231.3,1469.5V1481.3M2233.7,1471.9V1486.0M2236.0,1478.9V1481.3M2238.4,1476.6V1483.7M2240.7,1474.2V1483.7M2243.1,1471.9V1481.3M2245.5,1471.9V1476.6M2247.8,1471.9V1476.6M2250.2,1474.2V1478.9M2252.5,1471.9V1483.7M2254.9,1474.2V1478.9M2257.2,1471.9V1478.9M2259.6,1469.5V1474.2M2261.9,1467.2V1474.2M2264.3,1467.2V1474.2M2266.6,1469.5V1476.6M2269.0,1467.2V1476.6M2271.4,1467.2V1476.6M2273.7,1469.5V1476.6M2276.1,1469.5V1476.6M2278.4,1474.2V1481.3M2280.8,1476.6V1483.7M2283.1,1476.6V1481.3M2285.5,1476.6V1483.7M2287.8,1478.9V1483.7M2290.2,1476.6V1483.7M2292.6,1474.2V1481.3M2294.9,1476.6V1483.7M2297.3,1476.6V1483.7M2299.6,1476.6V1481.3M2302.0,1474.2V1483.7M2304.3,1471.9V1476.6M2306.7,1469.5V1476.6M2309.0,1469.5V1478.9M2311.4,1469.5V1478.9M2313.7,1469.5V1476.6M2316.1,1469.5V1476.6M2318.5,1464.8V1474.2M2320.8,1467.2V1476.6M2323.2,1471.9V1478.9M2325.5,1471.9V1478.9M2327.9,1471.9V1478.9M2330.2,1471.9V1481.3M2332.6,1474.2V1488.4M2334.9,1474.2V1488.4M2337.3,1474.2V1481.3M2339.7,1474.2V1478.9M2342.0,1474.2V1478.9M2344.4,1476.6V1483.7M2346.7,1474.2V1483.7M2349.1,1474.2V1481.3M2351.4,1476.6V1481.3M2353.8,1471.9V1483.7M2356.1,1474.2V1481.3M2358.5,1474.2V1481.3M2360.8,1476.6V1483.7M2363.2,1474.2V1483.7M2365.6,1474.2V1490.7M2367.9,1476.6V1493.1M2370.3,1474.2V1481.3M2372.6,1478.9V1481.3M2375.0,1476.6V1483.7M2377.3,1478.9V1481.3M2379.7,1474.2V1483.7M2382.0,1476.6V1478.9M2384.4,1474.2V1481.3M2386.8,1474.2V1483.7M2389.1,1476.6V1486.0M2391.5,1476.6V1490.7M2393.8,1469.5V1481.3M2396.2,1471.9V1481.3M2398.5,1469.5V1483.7M2400.9,1471.9V1481.3M2403.2,1469.5V1481.3M2405.6,1474.2V1481.3M2407.9,1471.9V1481.3M2410.3,1471.9V1481.3M2412.7,1471.9V1478.9M2415.0,1474.2V1478.9M2417.4,1474.2V1481.3M2419.7,1476.6V1486.0M2422.1,1478.9V1486.0M2424.4,1474.2V1483.7M2426.8,1471.9V1481.3M2429.1,1476.6V1483.7M2431.5,1474.2V1483.7M2433.9,1469.5V1483.7M2436.2,1462.5V1476.6M2438.6,1460.1V1474.2M2440.9,1467.2V1476.6M2443.3,1467.2V1476.6M2445.6,1474.2V1478.9M2448.0,1469.5V1481.3M2450.3,1471.9V1478.9M2452.7,1469.5V1478.9M2455.0,1471.9V1488.4M2457.4,1474.2V1486.0M2459.8,1471.9V1478.9M2462.1,1474.2V1481.3M2464.5,1474.2V1481.3M2466.8,1478.9V1483.7M2469.2,1478.9V1483.7M2471.5,1476.6V1481.3M2473.9,1474.2V1481.3M2476.2,1471.9V1478.9M2478.6,1471.9V1481.3M2481.0,1476.6V1483.7M2483.3,1474.2V1486.0M2485.7,1471.9V1483.7M2488.0,1474.2V1481.3M2490.4,1469.5V1476.6M2492.7,1467.2V1481.3M2495.1,1467.2V1478.9M2497.4,1467.2V1474.2M2499.8,1471.9V1478.9M2502.1,1467.2V1474.2M2504.5,1469.5V1474.2M2506.9,1464.8V1478.9M2509.2,1469.5V1476.6M2511.6,1467.2V1474.2M2513.9,1467.2V1476.6M2516.3,1469.5V1476.6M2518.6,1469.5V1476.6M2521.0,1467.2V1476.6M2523.3,1467.2V1478.9M2525.7,1467.2V1478.9M2528.1,1469.5V1476.6M2530.4,1469.5V1478.9M2532.8,1471.9V1490.7M2535.1,1476.6V1486.0M2537.5,1474.2V1481.3M2539.8,1474.2V1481.3M2542.2,1474.2V1481.3M2544.5,1469.5V1481.3M2546.9,1471.9V1481.3M2549.2,1476.6V1486.0M2551.6,1476.6V1481.3M2554.0,1476.6V1481.3M2556.3,1474.2V1481.3M2558.7,1476.6V1481.3M2561.0,1478.9V1483.7M2563.4,1478.9V1483.7M2565.7,1476.6V1483.7" fill="none" stroke="#ffff00" stroke-width="2.5"/>
<text x="41.6" y="138.7" font-size="44.62" textLength="318.3" lengthAdjust="spacingAndGlyphs" font-weight="normal" fill="#ececec" stroke="#ececec" stroke-width="0.7" >Waveform View</text>
<rect x="863" y="127" width="851" height="5" fill="#a9a9a9"/>
<path d="M878,109.5 H862.8 V146.6 H878" fill="none" stroke="#f0f0f0" stroke-width="3"/>
<path d="M1700,109.5 H1714.9 V146.6 H1700" fill="none" stroke="#f0f0f0" stroke-width="3"/>
<path d="M1271,97 H1306.5 L1288.7,108.3 Z" fill="#f5891f"/>
<path d="M1274.2,120 H1303.2 V150.6 H1293 L1288.7,159.9 L1284.4,150.6 H1274.2 Z" fill="#000" stroke="#f5891f" stroke-width="2.4"/>
<path d="M1282,126.5 H1295.5 M1288.7,126.5 V145" stroke="#f5891f" stroke-width="2.6"/>
<path d="M1264,162 H1310.8 L1287.4,184.6 Z" fill="#f5891f"/>
<path d="M1266.4,188.4 H1308.4 V232 H1296 L1287.4,249 L1278.8,232 H1266.4 Z" fill="#000" stroke="#f5891f" stroke-width="4.8"/>
<path d="M1276.5,200 H1298.5 M1287.4,200 V225" stroke="#f5891f" stroke-width="3.6"/>
<path d="M2460,178.5 H2549 Q2553,178.5 2553,182.5 V270.5 Z" fill="#555556" stroke="#333" stroke-width="2.6" stroke-linejoin="round"/>
<circle cx="2531.8" cy="197" r="9.8" fill="none" stroke="#a3a3a3" stroke-width="3.2"/>
<path d="M2525,204 L2508.5,220.5" stroke="#a3a3a3" stroke-width="4.4" stroke-linecap="round"/>
<text x="2553.5" y="314.4" font-size="29.1" text-anchor="end" fill="#151515" stroke="#151515" stroke-width="0.9" transform="translate(1.6,0)">17.6 V</text>
<text x="2553.5" y="312.8" font-size="29.1" text-anchor="end" fill="#f2ea3a" stroke="#f2ea3a" stroke-width="0.9">17.6 V</text>
<text x="2553.5" y="462.9" font-size="29.1" text-anchor="end" fill="#151515" stroke="#151515" stroke-width="0.9" transform="translate(1.6,0)">13.2 V</text>
<text x="2553.5" y="461.3" font-size="29.1" text-anchor="end" fill="#f2ea3a" stroke="#f2ea3a" stroke-width="0.9">13.2 V</text>
<text x="2553.5" y="613.4" font-size="29.1" text-anchor="end" fill="#151515" stroke="#151515" stroke-width="0.9" transform="translate(1.6,0)">8.8 V</text>
<text x="2553.5" y="611.8" font-size="29.1" text-anchor="end" fill="#f2ea3a" stroke="#f2ea3a" stroke-width="0.9">8.8 V</text>
<text x="2553.5" y="761.4" font-size="29.1" text-anchor="end" fill="#151515" stroke="#151515" stroke-width="0.9" transform="translate(1.6,0)">4.4 V</text>
<text x="2553.5" y="759.8" font-size="29.1" text-anchor="end" fill="#f2ea3a" stroke="#f2ea3a" stroke-width="0.9">4.4 V</text>
<text x="2553.5" y="1060.9" font-size="29.1" text-anchor="end" fill="#151515" stroke="#151515" stroke-width="0.9" transform="translate(1.6,0)">-4.4 V</text>
<text x="2553.5" y="1059.3" font-size="29.1" text-anchor="end" fill="#f2ea3a" stroke="#f2ea3a" stroke-width="0.9">-4.4 V</text>
<text x="2553.5" y="1211.4" font-size="29.1" text-anchor="end" fill="#151515" stroke="#151515" stroke-width="0.9" transform="translate(1.6,0)">-8.8 V</text>
<text x="2553.5" y="1209.8" font-size="29.1" text-anchor="end" fill="#f2ea3a" stroke="#f2ea3a" stroke-width="0.9">-8.8 V</text>
<text x="2553.5" y="1359.4" font-size="29.1" text-anchor="end" fill="#151515" stroke="#151515" stroke-width="0.9" transform="translate(1.6,0)">-13.2 V</text>
<text x="2553.5" y="1357.8" font-size="29.1" text-anchor="end" fill="#f2ea3a" stroke="#f2ea3a" stroke-width="0.9">-13.2 V</text>
<text x="2553.5" y="1510.4" font-size="29.1" text-anchor="end" fill="#151515" stroke="#151515" stroke-width="0.9" transform="translate(1.6,0)">-17.6 V</text>
<text x="2553.5" y="1508.8" font-size="29.1" text-anchor="end" fill="#f2ea3a" stroke="#f2ea3a" stroke-width="0.9">-17.6 V</text>
<text x="266.5" y="1643" font-size="29.8" text-anchor="middle" fill="#161616">-800 ns</text>
<text x="265.0" y="1641.5" font-size="29.8" text-anchor="middle" fill="#bdbdbd" stroke="#bdbdbd" stroke-width="0.5">-800 ns</text>
<text x="522.2" y="1643" font-size="29.8" text-anchor="middle" fill="#161616">-600 ns</text>
<text x="520.7" y="1641.5" font-size="29.8" text-anchor="middle" fill="#bdbdbd" stroke="#bdbdbd" stroke-width="0.5">-600 ns</text>
<text x="777.9" y="1643" font-size="29.8" text-anchor="middle" fill="#161616">-400 ns</text>
<text x="776.4" y="1641.5" font-size="29.8" text-anchor="middle" fill="#bdbdbd" stroke="#bdbdbd" stroke-width="0.5">-400 ns</text>
<text x="1033.6" y="1643" font-size="29.8" text-anchor="middle" fill="#161616">-200 ns</text>
<text x="1032.1" y="1641.5" font-size="29.8" text-anchor="middle" fill="#bdbdbd" stroke="#bdbdbd" stroke-width="0.5">-200 ns</text>
<text x="1289.3" y="1643" font-size="29.8" text-anchor="middle" fill="#161616">0 s</text>
<text x="1287.8" y="1641.5" font-size="29.8" text-anchor="middle" fill="#bdbdbd" stroke="#bdbdbd" stroke-width="0.5">0 s</text>
<text x="1545.0" y="1643" font-size="29.8" text-anchor="middle" fill="#161616">200 ns</text>
<text x="1543.5" y="1641.5" font-size="29.8" text-anchor="middle" fill="#bdbdbd" stroke="#bdbdbd" stroke-width="0.5">200 ns</text>
<text x="1800.6" y="1643" font-size="29.8" text-anchor="middle" fill="#161616">400 ns</text>
<text x="1799.1" y="1641.5" font-size="29.8" text-anchor="middle" fill="#bdbdbd" stroke="#bdbdbd" stroke-width="0.5">400 ns</text>
<text x="2056.3" y="1643" font-size="29.8" text-anchor="middle" fill="#161616">600 ns</text>
<text x="2054.8" y="1641.5" font-size="29.8" text-anchor="middle" fill="#bdbdbd" stroke="#bdbdbd" stroke-width="0.5">600 ns</text>
<text x="2312.0" y="1643" font-size="29.8" text-anchor="middle" fill="#161616">800 ns</text>
<text x="2310.5" y="1641.5" font-size="29.8" text-anchor="middle" fill="#bdbdbd" stroke="#bdbdbd" stroke-width="0.5">800 ns</text>
<path d="M16.5,878 H80.5 L109.5,909 L80.5,942 H16.5 Z" fill="#fff23a" stroke="#3a3a2a" stroke-width="1.6" stroke-linejoin="round"/>
<text x="41.5" y="917.5" font-size="29.07" textLength="39.5" lengthAdjust="spacingAndGlyphs" font-weight="normal" fill="#2b2b2b" >C 1</text>
<text x="2511" y="911" font-size="28" fill="#f2ea3a">0 V</text>
<path d="M2566.5,906.3 H2547 V889.2 L2519,911.8 L2547,935.2 V917.4 H2566.5 Z" fill="#000"/>
<path d="M2566.5,909 H2545 V891.7 L2522,911.8 L2545,932.7 V916.2 H2566.5 Z" fill="#fff23a"/>
<rect x="2590" y="858.7" width="9" height="6.6" rx="1.5" fill="#c8c8c8"/>
<rect x="2590" y="873.2" width="9" height="6.6" rx="1.5" fill="#c8c8c8"/>
<rect x="2590" y="887.2" width="9" height="6.6" rx="1.5" fill="#c8c8c8"/>
<text x="54.2" y="46.9" font-size="44.77" textLength="65.7" lengthAdjust="spacingAndGlyphs" font-weight="normal" fill="#f4f4f4" stroke="#f4f4f4" stroke-width="0.9" >File</text>
<text x="230.9" y="46.9" font-size="44.77" textLength="75.1" lengthAdjust="spacingAndGlyphs" font-weight="normal" fill="#f4f4f4" stroke="#f4f4f4" stroke-width="0.9" >Edit</text>
<text x="413.7" y="47.0" font-size="45.06" textLength="118.3" lengthAdjust="spacingAndGlyphs" font-weight="normal" fill="#f4f4f4" stroke="#f4f4f4" stroke-width="0.9" >Utility</text>
<text x="642.4" y="47.0" font-size="45.06" textLength="87.5" lengthAdjust="spacingAndGlyphs" font-weight="normal" fill="#f4f4f4" stroke="#f4f4f4" stroke-width="0.9" >Help</text>
<text x="1813.0" y="46.8" font-size="40.41" textLength="309.4" lengthAdjust="spacingAndGlyphs" font-weight="normal" fill="#f4f4f4" stroke="#f4f4f4" stroke-width="0.8" >Sample: 1/1 Acqs</text>
<g fill="#ffffff"><path d="M2698,8.9 H2739.6 L2733,21.2 H2724 V60.8 H2706.9 V21.2 H2698 Z"/><path fill-rule="evenodd" d="M2735,24.1 H2755 Q2763.7,24.1 2763.7,33 V47.3 H2738.3 V51.6 H2763.7 Q2763.7,60.8 2755,60.8 H2735 Q2726,60.8 2726,52 V33 Q2726,24.1 2735,24.1 Z M2738.3,33 V37.7 H2751.8 V33 Z"/><rect x="2766" y="8.9" width="12" height="51.9"/><path d="M2785.2,60.8 H2801 L2792.5,43.5 Z"/><path d="M2804,60.8 V21.5 L2814.5,9 H2816 V24.1 H2822.6 V34.4 H2816 V60.8 Z"/><path d="M2825,60.8 V24.1 H2844 V34.4 H2836.8 V60.8 Z"/><path fill-rule="evenodd" d="M2861,24.2 H2866.7 Q2883.4,24.2 2883.4,41 V44.3 Q2883.4,61.1 2866.7,61.1 H2861 Q2844.3,61.1 2844.3,44.3 V41 Q2844.3,24.2 2861,24.2 Z M2864,33.8 Q2858,33.8 2858,40 V45.3 Q2858,51.5 2864,51.5 H2865.6 Q2871.6,51.5 2871.6,45.3 V40 Q2871.6,33.8 2865.6,33.8 Z"/><path d="M2885.9,61.1 V24.2 H2907 Q2919,24.2 2919,36 V61.1 H2907 V38.5 Q2907,33.8 2902.5,33.8 H2898 V61.1 Z"/><rect x="2924" y="24.2" width="12.1" height="36.9"/><circle cx="2929.8" cy="14.9" r="6.3"/><path d="M2938,24.2 H2949.5 L2955.3,32.2 L2961,24.2 H2972.7 L2964,42.2 L2972.7,61.1 H2961 L2955.3,52.7 L2949.5,61.1 H2938 L2946.6,42.2 Z"/></g>
<path d="M2766,60.8 H2778.6 L2803.8,21.2 H2790.5 Z" fill="#1fbcdc"/>
<line x1="2611.8" y1="88" x2="2611.8" y2="1663.5" stroke="#585858" stroke-width="2"/>
<line x1="2611" y1="88" x2="3013" y2="88" stroke="#6b6560" stroke-width="2"/>
<line x1="2611.8" y1="1662.5" x2="3013" y2="1662.5" stroke="#6b6560" stroke-width="2"/>
<rect x="2631.5" y="113.8" width="165.5" height="98.0" rx="6" fill="url(#gBtn)" stroke="#5f5a55" stroke-width="2"/>
<rect x="2824.6" y="113.8" width="166.1" height="98.0" rx="6" fill="url(#gBtn)" stroke="#5f5a55" stroke-width="2"/>
<rect x="2631.5" y="236.5" width="165.5" height="97.5" rx="6" fill="url(#gBtn)" stroke="#5f5a55" stroke-width="2"/>
<rect x="2824.6" y="236.5" width="166.1" height="97.5" rx="6" fill="url(#gBtn)" stroke="#5f5a55" stroke-width="2"/>
<rect x="2631.5" y="372.7" width="165.5" height="98.0" rx="6" fill="url(#gBtn)" stroke="#5f5a55" stroke-width="2"/>
<rect x="2824.6" y="372.7" width="166.1" height="98.0" rx="6" fill="url(#gBtn)" stroke="#5f5a55" stroke-width="2"/>
<line x1="2620" y1="356.4" x2="3003" y2="356.4" stroke="#6b6560" stroke-width="2"/>
<line x1="2620" y1="493" x2="3003" y2="493" stroke="#6b6560" stroke-width="2"/>
<text x="2647.8" y="171.7" font-size="40.41" textLength="135.5" lengthAdjust="spacingAndGlyphs" font-weight="normal" fill="#e8e8e8" stroke="#e8e8e8" stroke-width="0.8" >Cursors</text>
<text x="2843.0" y="171.7" font-size="40.41" textLength="132.0" lengthAdjust="spacingAndGlyphs" font-weight="normal" fill="#e8e8e8" stroke="#e8e8e8" stroke-width="0.8" >Callout</text>
<text x="2637.5" y="293.9" font-size="40.41" textLength="156.4" lengthAdjust="spacingAndGlyphs" font-weight="normal" fill="#e8e8e8" stroke="#e8e8e8" stroke-width="0.8" >Measure</text>
<text x="2848.6" y="293.9" font-size="40.41" textLength="119.4" lengthAdjust="spacingAndGlyphs" font-weight="normal" fill="#e8e8e8" stroke="#e8e8e8" stroke-width="0.8" >Search</text>
<text x="2843.0" y="431.4" font-size="42.73" textLength="130.6" lengthAdjust="spacingAndGlyphs" font-weight="normal" fill="#e8e8e8" stroke="#e8e8e8" stroke-width="0.8" >More...</text>
<rect x="2686" y="393" width="7" height="7" fill="#c4c4c4"/>
<rect x="2700" y="393" width="12" height="7" fill="#c4c4c4"/>
<rect x="2717" y="393" width="11" height="7" fill="#c4c4c4"/>
<rect x="2733" y="393" width="10" height="7" fill="#c4c4c4"/>
<rect x="2686" y="405" width="7" height="9" fill="#c4c4c4"/>
<rect x="2686" y="419" width="7" height="9" fill="#c4c4c4"/>
<rect x="2686" y="436" width="10" height="7" fill="#c4c4c4"/>
<rect x="2736" y="405" width="7" height="9" fill="#c4c4c4"/>
<rect x="2736" y="419" width="7" height="9" fill="#c4c4c4"/>
<rect x="2700" y="436" width="12" height="7" fill="#c4c4c4"/>
<rect x="2717" y="436" width="11" height="7" fill="#c4c4c4"/>
<rect x="2696.4" y="402.9" width="31.5" height="28" fill="#c2c2c2"/>
<rect x="2696.4" y="402.9" width="31.5" height="2" fill="#7c7c7c"/><rect x="2696.4" y="428.6" width="31.5" height="2.4" fill="#747474"/>
<path d="M2696.4,419.2 H2706.6 V412.6 H2719.6 V419.2 H2727.9" fill="none" stroke="#3a3a3a" stroke-width="2"/>
<path d="M2729.6,428.2 L2733,449 L2737.3,445.2 L2740.6,451.8 L2744.3,450.2 L2741.2,443.6 L2747,441.5 Z" fill="#c6c6c6" stroke="#2d2d2d" stroke-width="0.8"/>
<path d="M2627,525 H2997 Q3004,525 3004,532 V574 H2620 V532 Q2620,525 2627,525 Z" fill="#000"/>
<path d="M2620,574 H3004 V723 Q3004,730 2997,730 H2627 Q2620,730 2620,723 Z" fill="#c9c9c9"/>
<rect x="2620" y="574" width="384" height="7" fill="#a9a9a9"/>
<text x="2636.5" y="560.0" font-size="40.70" textLength="207.4" lengthAdjust="spacingAndGlyphs" font-weight="bold" fill="#fff23a" >Mask Test 1</text>
<rect x="2931" y="533.7" width="56.4" height="32.4" rx="16.2" fill="#fff23a" stroke="#6b6a20" stroke-width="1"/>
<text x="2959" y="561" font-size="22" text-anchor="middle" fill="#5a5a20">1</text>
<text x="2634.6" y="611.9" font-size="40.99" textLength="144.4" lengthAdjust="spacingAndGlyphs" font-weight="normal" fill="#1c1c1c" >Wfms: 0</text>
<text x="2635.6" y="661.5" font-size="41.72" textLength="141.6" lengthAdjust="spacingAndGlyphs" font-weight="normal" fill="#1c1c1c" >Failed: 0</text>
<text x="2636.5" y="710.6" font-size="40.41" textLength="180.5" lengthAdjust="spacingAndGlyphs" font-weight="normal" fill="#1c1c1c" >Status: Off</text>
<path d="M14,1671 H238 Q245,1671 245,1678 V1721 H7 V1678 Q7,1671 14,1671 Z" fill="#fff23a"/>
<path d="M7,1721 H245 V1868.6 Q245,1875.6 238,1875.6 H14 Q7,1875.6 7,1868.6 Z" fill="#c9c9c9"/>
<rect x="7" y="1721" width="238" height="6.8" fill="#a9a9a9"/>
<text x="21.7" y="1706.6" font-size="39.68" textLength="75.4" lengthAdjust="spacingAndGlyphs" font-weight="normal" fill="#1c1c1c" >Ch 1</text>
<text x="20.7" y="1758.9" font-size="41.28" textLength="150.9" lengthAdjust="spacingAndGlyphs" font-weight="normal" fill="#1c1c1c" >4.4 V/div</text>
<text x="24.8" y="1807.4" font-size="41.28" textLength="75.4" lengthAdjust="spacingAndGlyphs" font-weight="normal" fill="#1c1c1c" >10 X</text>
<text x="21.7" y="1859.1" font-size="41.28" textLength="155.6" lengthAdjust="spacingAndGlyphs" font-weight="normal" fill="#1c1c1c" >500 MHz</text>
<rect x="1272.0" y="1672" width="115.0" height="202.7" rx="7" fill="url(#gBtn)" stroke="#5f5a55" stroke-width="2"/>
<rect x="1288.0" y="1692.9" width="86.7" height="6.7" fill="#1fcad6"/>
<rect x="1399.3" y="1672" width="115.6" height="202.7" rx="7" fill="url(#gBtn)" stroke="#5f5a55" stroke-width="2"/>
<rect x="1417.0" y="1692.9" width="86.5" height="6.7" fill="#e8405a"/>
<rect x="1528.8" y="1672" width="114.5" height="202.7" rx="7" fill="url(#gBtn)" stroke="#5f5a55" stroke-width="2"/>
<rect x="1544.0" y="1692.9" width="86.7" height="6.7" fill="#8fcc2e"/>
<rect x="1671.9" y="1672" width="115.1" height="202.7" rx="7" fill="url(#gBtn)" stroke="#5f5a55" stroke-width="2"/>
<text x="1315.7" y="1803.0" font-size="53.78" textLength="26.1" lengthAdjust="spacingAndGlyphs" font-weight="normal" fill="#e4e4e4" >2</text>
<text x="1443.5" y="1803.0" font-size="53.78" textLength="26.0" lengthAdjust="spacingAndGlyphs" font-weight="normal" fill="#e4e4e4" >3</text>
<text x="1570.0" y="1803.0" font-size="53.78" textLength="31.0" lengthAdjust="spacingAndGlyphs" font-weight="normal" fill="#e4e4e4" >4</text>
<text x="1685.3" y="1756.2" font-size="42.59" textLength="88.0" lengthAdjust="spacingAndGlyphs" font-weight="normal" fill="#e4e4e4" >Math</text>
<text x="1702.6" y="1798.8" font-size="42.59" textLength="55.8" lengthAdjust="spacingAndGlyphs" font-weight="normal" fill="#e4e4e4" >Ref</text>
<text x="1701.4" y="1839.7" font-size="42.59" textLength="58.3" lengthAdjust="spacingAndGlyphs" font-weight="normal" fill="#e4e4e4" >Bus</text>
<line x1="1658" y1="1671" x2="1658" y2="1875" stroke="#6b6560" stroke-width="2"/>
<line x1="1801.8" y1="1671" x2="1801.8" y2="1875" stroke="#6b6560" stroke-width="2"/>
<line x1="1827.9" y1="1671" x2="1827.9" y2="1875" stroke="#6b6560" stroke-width="2"/>
<line x1="2744" y1="1671" x2="2744" y2="1875" stroke="#6b6560" stroke-width="2"/>
<rect x="1841.0" y="1671" width="293.5" height="204" rx="9" fill="#000"/>
<path d="M1850.0,1673.5 H2125.5 Q2132.5,1673.5 2132.5,1680.5 V1723 H1843.0 V1680.5 Q1843.0,1673.5 1850.0,1673.5 Z" fill="#5b5c5e"/>
<path d="M1843.0,1723 H2132.5 V1866 Q2132.5,1873 2125.5,1873 H1850.0 Q1843.0,1873 1843.0,1866 Z" fill="#c9c9c9"/>
<rect x="1843.0" y="1723" width="289.5" height="7" fill="#a9a9a9"/>
<rect x="2143.0" y="1671" width="257.4" height="204" rx="9" fill="#000"/>
<path d="M2152.0,1673.5 H2391.4 Q2398.4,1673.5 2398.4,1680.5 V1723 H2145.0 V1680.5 Q2145.0,1673.5 2152.0,1673.5 Z" fill="#5b5c5e"/>
<path d="M2145.0,1723 H2398.4 V1866 Q2398.4,1873 2391.4,1873 H2152.0 Q2145.0,1873 2145.0,1866 Z" fill="#c9c9c9"/>
<rect x="2145.0" y="1723" width="253.4" height="7" fill="#a9a9a9"/>
<rect x="2410.6" y="1671" width="316.0" height="204" rx="9" fill="#000"/>
<path d="M2419.6,1673.5 H2717.6 Q2724.6,1673.5 2724.6,1680.5 V1723 H2412.6 V1680.5 Q2412.6,1673.5 2419.6,1673.5 Z" fill="#5b5c5e"/>
<path d="M2412.6,1723 H2724.6 V1866 Q2724.6,1873 2717.6,1873 H2419.6 Q2412.6,1873 2412.6,1866 Z" fill="#c9c9c9"/>
<rect x="2412.6" y="1723" width="312.0" height="7" fill="#a9a9a9"/>
<text x="1857.2" y="1708.8" font-size="40.41" textLength="75.6" lengthAdjust="spacingAndGlyphs" font-weight="bold" fill="#f0f0f0" >AFG</text>
<text x="1855.2" y="1758.4" font-size="41.28" textLength="147.1" lengthAdjust="spacingAndGlyphs" font-weight="normal" fill="#1c1c1c" >Arbitrary</text>
<text x="1857.2" y="1806.7" font-size="41.28" textLength="116.6" lengthAdjust="spacingAndGlyphs" font-weight="normal" fill="#1c1c1c" >10 kHz</text>
<text x="1855.2" y="1859.6" font-size="41.28" textLength="154.5" lengthAdjust="spacingAndGlyphs" font-weight="normal" fill="#1c1c1c" >3.26 Vpp</text>
<text x="2158.5" y="1708.8" font-size="40.41" textLength="194.2" lengthAdjust="spacingAndGlyphs" font-weight="normal" fill="#f0f0f0" stroke="#f0f0f0" stroke-width="0.8" >Horizontal</text>
<text x="2156.0" y="1758.4" font-size="41.28" textLength="173.7" lengthAdjust="spacingAndGlyphs" font-weight="normal" fill="#1c1c1c" >200 ns/div</text>
<text x="2156.0" y="1806.7" font-size="41.28" textLength="203.4" lengthAdjust="spacingAndGlyphs" font-weight="normal" fill="#1c1c1c" >SR: 2.5 GS/s</text>
<text x="2156.0" y="1859.6" font-size="41.28" textLength="163.8" lengthAdjust="spacingAndGlyphs" font-weight="normal" fill="#1c1c1c" >RL: 5 kpts</text>
<text x="2422.2" y="1709.3" font-size="42.01" textLength="131.6" lengthAdjust="spacingAndGlyphs" font-weight="normal" fill="#f0f0f0" stroke="#f0f0f0" stroke-width="0.8" >Trigger</text>
<text x="2587.3" y="1709.3" font-size="42.01" textLength="25.8" lengthAdjust="spacingAndGlyphs" font-weight="normal" fill="#f0f0f0" stroke="#f0f0f0" stroke-width="0.8" >N</text>
<rect x="2626" y="1680.4" width="77.4" height="39.8" rx="10" fill="#fff23a" stroke="#222" stroke-width="1.5"/>
<path d="M2660,1687 L2665,1683 V1709" fill="none" stroke="#333" stroke-width="2.6"/>
<path d="M2420.4,1762.2 H2433.8 L2451.9,1736.4 H2461.7" fill="none" stroke="#4a4aa0" stroke-width="2.6"/>
<text x="2486.7" y="1758.3" font-size="41.13" textLength="147.0" lengthAdjust="spacingAndGlyphs" font-weight="normal" fill="#1c1c1c" >-352 mV</text>
<rect x="2759.3" y="1681.4" width="232" height="79" rx="12" fill="#ff1f2a" stroke="#7a6f6f" stroke-width="2"/>
<text x="2798.8" y="1728.7" font-size="37.50" textLength="150.9" lengthAdjust="spacingAndGlyphs" font-weight="bold" fill="#ffffff" >Stopped</text>
<rect x="2757.5" y="1775" width="233.5" height="98" rx="12" fill="#c9c9c9"/>
<text x="2773.0" y="1812.5" font-size="41.42" textLength="202.5" lengthAdjust="spacingAndGlyphs" font-weight="normal" fill="#1c1c1c" >19 Jan 2022</text>
<text x="2775.6" y="1856.3" font-size="41.42" textLength="196.0" lengthAdjust="spacingAndGlyphs" font-weight="normal" fill="#1c1c1c" >6:55:43 PM</text>
<rect x="3013" y="0" width="1" height="1884" fill="#d8d8d8"/>
<rect x="0" y="1883" width="3014" height="1" fill="#d8d8d8"/>
</svg></body></html>
